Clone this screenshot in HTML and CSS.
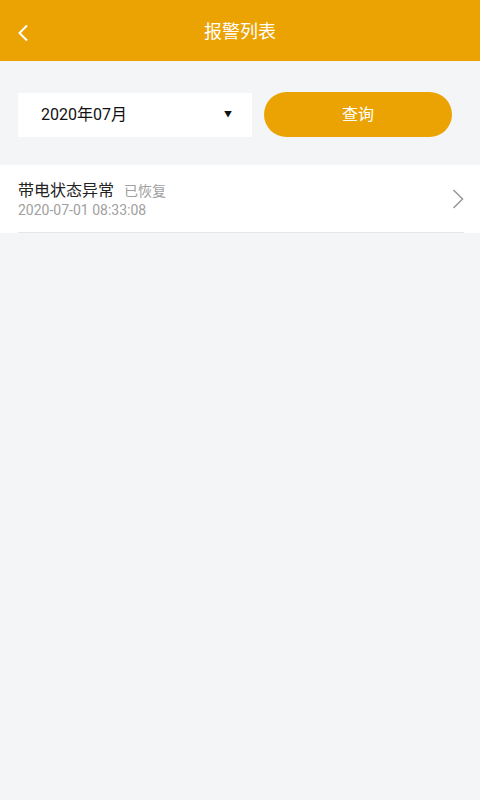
FILE: index.html
```html
<!DOCTYPE html>
<html lang="zh">
<head>
<meta charset="utf-8">
<link rel="stylesheet" href="styles.css">
</head>
<body>
<div class="page">
  <header class="topbar">
    <svg class="back" width="12" height="18" viewBox="0 0 12 18"><path d="M10 1.5 L2.5 9 L10 16.5" fill="none" stroke="#fff" stroke-width="2"/></svg>
    <div class="title">报警列表</div>
  </header>
  <div class="filter">
    <div class="select">
      <span class="select-text">2020年07月</span>
      <span class="caret">▼</span>
    </div>
    <div class="btn">查询</div>
  </div>
  <div class="list">
    <div class="item">
      <div class="item-body">
        <div class="item-title"><span class="name">带电状态异常</span><span class="status">已恢复</span></div>
        <div class="item-time">2020-07-01 08:33:08</div>
      </div>
      <svg class="chev" width="12" height="20" viewBox="0 0 12 20"><path d="M1.5 1 L10.5 10 L1.5 19" fill="none" stroke="#9a9a9a" stroke-width="1.6"/></svg>
    </div>
  </div>
</div>
</body>
</html>
```
FILE: styles.css
```css
html, body {
  margin: 0;
  padding: 0;
}
body {
  background: #f4f5f7;
  font-family: Roboto, "Noto Sans CJK SC", sans-serif;
  width: 480px;
  height: 800px;
}
.topbar {
  height: 61px;
  background: #eba304;
  position: relative;
  display: flex;
  align-items: center;
  justify-content: center;
}
.back {
  position: absolute;
  left: 17px;
  top: 24px;
}
.title {
  color: #fff;
  font-size: 18px;
  line-height: 20px;
  margin-top: 2px;
}
.filter {
  display: flex;
  align-items: center;
  padding: 31px 28px 0 18px;
  gap: 12px;
}
.select {
  width: 234px;
  height: 44px;
  background: #fff;
  display: flex;
  align-items: center;
  justify-content: space-between;
  box-sizing: border-box;
  padding: 0 20px 0 23px;
}
.select-text {
  font-size: 16px;
  line-height: 18px;
  color: #111;
}
.caret {
  font-size: 8px;
  line-height: 10px;
  color: #111;
}
.btn {
  width: 188px;
  height: 45px;
  border-radius: 23px;
  background: #eba304;
  color: #fff;
  font-size: 16px;
  line-height: 18px;
  display: flex;
  align-items: center;
  justify-content: center;
}
.list {
  margin-top: 28px;
  background: #fff;
}
.item {
  margin-left: 18px;
  margin-right: 16px;
  height: 67px;
  border-bottom: 1px solid #e6e6e6;
  display: flex;
  align-items: center;
  justify-content: space-between;
}
.item-body {
  display: flex;
  flex-direction: column;
  margin-top: 2px;
}
.item-title {
  display: flex;
  align-items: baseline;
  line-height: 20px;
}
.name {
  font-size: 16px;
  color: #222;
}
.status {
  font-size: 14px;
  color: #a0a0a0;
  margin-left: 10px;
}
.item-time {
  font-size: 14px;
  color: #a0a0a0;
  line-height: 18px;
}
.chev {
  margin-top: 1px;
}
```
